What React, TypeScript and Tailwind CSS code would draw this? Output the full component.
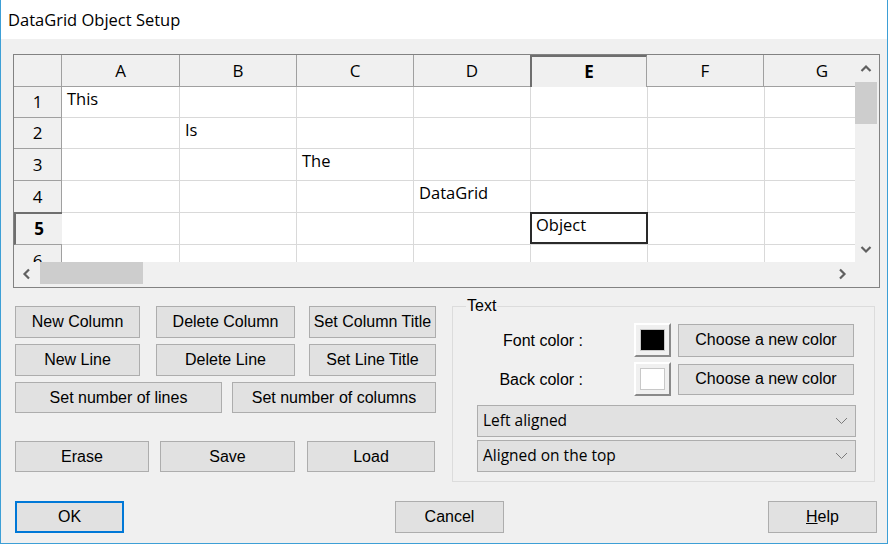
import React from 'react'

const UI = { fontFamily: '"Open Sans", "Noto Sans", sans-serif' }
const MS = { fontFamily: '"Liberation Sans", Arial, sans-serif' }

const columns = ['A', 'B', 'C', 'D', 'E', 'F', 'G']
const colWidths = [118, 117, 117, 117, 117, 117, 117]
const rowHeights = [31, 31, 32, 32, 32, 32]

// cell text by [row][col]
const cellText: Record<string, string> = {
  '0-0': 'This',
  '1-1': 'Is',
  '2-2': 'The',
  '3-3': 'DataGrid',
  '4-4': 'Object',
}

const SEL_ROW = 4
const SEL_COL = 4

function Chevron({ dir }: { dir: 'up' | 'down' | 'left' | 'right' }) {
  const d = {
    up: 'M1.5 8 L6 3.5 L10.5 8',
    down: 'M1.5 4 L6 8.5 L10.5 4',
    left: 'M8 1.5 L3.5 6 L8 10.5',
    right: 'M4 1.5 L8.5 6 L4 10.5',
  }[dir]
  return (
    <svg width="12" height="12" viewBox="0 0 12 12">
      <path d={d} fill="none" stroke="#606060" strokeWidth="2.2" />
    </svg>
  )
}

function Button({ label, className = '' }: { label: React.ReactNode; className?: string }) {
  return (
    <div
      style={MS}
      className={`flex items-center justify-center bg-[#e1e1e1] border border-[#adadad] text-[16px] text-black ${className}`}
    >
      {label}
    </div>
  )
}

function Combo({ label }: { label: string }) {
  return (
    <div className="flex items-center justify-between w-[379px] h-[32px] bg-[#e1e1e1] border border-[#adadad] pl-[5px] pr-[7px]">
      <span style={UI} className="text-[15.5px] text-black">{label}</span>
      <svg width="13" height="8" viewBox="0 0 13 8">
        <path d="M1 1 L6.5 6.5 L12 1" fill="none" stroke="#7a7a7a" strokeWidth="1" />
      </svg>
    </div>
  )
}

function Swatch({ color }: { color: string }) {
  return (
    <div className="w-[37px] h-[34px] bg-[#f0f0f0] border-2 border-t-white border-l-white border-r-[#8a8a8a] border-b-[#8a8a8a] p-[4px]">
      <div className="w-full h-full border border-[#c8c8c8]" style={{ backgroundColor: color }} />
    </div>
  )
}

function DataGrid() {
  return (
    <div className="ml-[12px] mt-[15px] w-[867px] h-[234px] border border-[#828282] bg-[#f0f0f0] flex flex-col">
      <div className="flex h-[207px]">
        {/* cells */}
        <div className="w-[841px] h-[207px] overflow-hidden bg-white">
          {/* header */}
          <div className="flex h-[32px]">
            <div className="w-[48px] shrink-0 bg-[#f0f0f0] border-r border-b border-[#a0a0a0]" />
            {columns.map((c, i) => (
              <div
                key={c}
                style={{ ...UI, width: colWidths[i] }}
                className={
                  i === SEL_COL
                    ? 'shrink-0 flex items-center justify-center bg-[#f0f0f0] border-t-2 border-l-2 border-r border-[#6e6e6e] border-r-[#a0a0a0] text-[17px] font-bold text-black -ml-px'
                    : 'shrink-0 flex items-center justify-center bg-[#f0f0f0] border-r border-b border-[#a0a0a0] text-[17px] text-black'
                }
              >
                {c}
              </div>
            ))}
          </div>
          {rowHeights.map((h, r) => (
            <div key={r} className="flex" style={{ height: h }}>
              <div
                style={UI}
                className={
                  r === SEL_ROW
                    ? 'w-[48px] shrink-0 flex items-center justify-center bg-[#f0f0f0] border-l-2 border-t-2 border-b border-[#6e6e6e] border-b-[#a0a0a0] text-[17px] font-bold text-black -mt-px'
                    : 'w-[48px] shrink-0 flex items-center justify-center bg-[#f0f0f0] border-r border-b border-[#a0a0a0] text-[17px] text-black'
                }
              >
                {r + 1}
              </div>
              {columns.map((c, i) => (
                <div
                  key={c}
                  style={{ ...UI, width: colWidths[i] }}
                  className="relative shrink-0 border-r border-b border-[#d9d9d9] text-[16.5px] text-black pl-[5px] pt-[1px] leading-[22px]"
                >
                  {cellText[`${r}-${i}`] ?? ''}
                  {r === SEL_ROW && i === SEL_COL && (
                    <div className="absolute -left-px -top-px right-[-1px] bottom-0 border-2 border-[#2a2a2a]" />
                  )}
                </div>
              ))}
            </div>
          ))}
        </div>
        {/* vertical scrollbar */}
        <div className="w-[24px] h-[207px] flex flex-col">
          <div className="w-[22px] h-[27px] flex items-center justify-center">
            <Chevron dir="up" />
          </div>
          <div className="w-[22px] h-[42px] bg-[#cdcdcd]" />
          <div className="flex-1" />
          <div className="w-[22px] h-[26px] flex items-center justify-center">
            <Chevron dir="down" />
          </div>
        </div>
      </div>
      {/* horizontal scrollbar */}
      <div className="flex h-[23px]">
        <div className="w-[841px] flex">
          <div className="w-[26px] flex items-center justify-center">
            <Chevron dir="left" />
          </div>
          <div className="w-[103px] h-[22px] bg-[#cdcdcd]" />
          <div className="flex-1" />
          <div className="w-[26px] flex items-center justify-center">
            <Chevron dir="right" />
          </div>
        </div>
      </div>
    </div>
  )
}

export default function App() {
  return (
    <div className="w-[888px] h-[544px] bg-[#f0f0f0] border-x border-b border-[#3d9fd6] flex flex-col">
      {/* title bar */}
      <div className="h-[39px] bg-white flex items-center pl-[7px] pt-[1px]">
        <span style={UI} className="text-[16.5px] text-black">DataGrid Object Setup</span>
      </div>

      <DataGrid />

      <div className="flex mt-[18px] ml-[14px]">
        {/* left buttons */}
        <div className="w-[422px] flex flex-col">
          <div className="flex h-[32px]">
            <Button label="New Column" className="w-[125px]" />
            <Button label="Delete Column" className="w-[139px] ml-[16px]" />
            <Button label="Set Column Title" className="w-[127px] ml-[14px]" />
          </div>
          <div className="flex h-[32px] mt-[6px]">
            <Button label="New Line" className="w-[125px]" />
            <Button label="Delete Line" className="w-[139px] ml-[16px]" />
            <Button label="Set Line Title" className="w-[127px] ml-[14px]" />
          </div>
          <div className="flex h-[31px] mt-[6px]">
            <Button label="Set number of lines" className="w-[207px]" />
            <Button label="Set number of columns" className="w-[204px] ml-[10px]" />
          </div>
          <div className="flex h-[31px] mt-[28px]">
            <Button label="Erase" className="w-[134px]" />
            <Button label="Save" className="w-[135px] ml-[11px]" />
            <Button label="Load" className="w-[128px] ml-[12px]" />
          </div>
        </div>

        {/* Text group box */}
        <div className="relative ml-[15px] w-[423px] h-[176px] border border-[#dcdcdc]">
          <span style={MS} className="absolute left-[13px] top-[-10px] bg-[#f0f0f0] px-px text-[16px] leading-[18px] text-black">
            Text
          </span>
          <div className="flex items-center mt-[16px]">
            <div style={MS} className="w-[130px] text-right text-[16px] text-black pt-[2px]">Font color :</div>
            <div className="ml-[51px]">
              <Swatch color="#000000" />
            </div>
            <Button label="Choose a new color" className="w-[176px] h-[33px] ml-[7px]" />
          </div>
          <div className="flex items-center mt-[5px]">
            <div style={MS} className="w-[130px] text-right text-[16px] text-black pt-[2px]">Back color :</div>
            <div className="ml-[51px]">
              <Swatch color="#ffffff" />
            </div>
            <Button label="Choose a new color" className="w-[176px] h-[31px] ml-[7px]" />
          </div>
          <div className="ml-[24px] mt-[9px] flex flex-col gap-[3px]">
            <Combo label="Left aligned" />
            <Combo label="Aligned on the top" />
          </div>
        </div>
      </div>

      {/* dialog buttons */}
      <div className="flex mt-[19px] ml-[14px]">
        <div
          style={MS}
          className="w-[109px] h-[32px] flex items-center justify-center bg-[#e1e1e1] border-2 border-[#0078d7] text-[16px] text-black"
        >
          OK
        </div>
        <Button label="Cancel" className="w-[109px] h-[32px] ml-[271px]" />
        <Button
          label={
            <span>
              <span className="underline">H</span>elp
            </span>
          }
          className="w-[109px] h-[32px] ml-[264px]"
        />
      </div>
    </div>
  )
}
